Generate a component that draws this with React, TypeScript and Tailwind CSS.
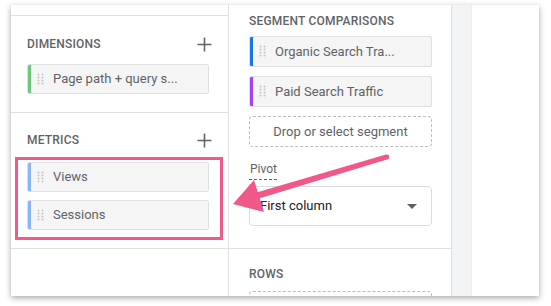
const Grip = () => (
  <svg width="7" height="13" viewBox="0 0 7 13" className="shrink-0">
    {[1.5, 4.5, 7.5, 10.5].map((y) => (
      <g key={y} fill="#c4c4c4">
        <circle cx="1.5" cy={y} r="1" />
        <circle cx="5.5" cy={y} r="1" />
      </g>
    ))}
  </svg>
);

const Plus = () => (
  <svg width="15" height="15" viewBox="0 0 15 15">
    <path d="M7.5 0.5v14M0.5 7.5h14" stroke="#5f6368" strokeWidth="1.6" />
  </svg>
);

const Chip = ({label, bar, w, h}: {label: string; bar: string; w: string; h: string}) => (
  <div
    className={`flex ${w} ${h} shrink-0 items-center gap-[8px] rounded-[2px] border border-[#e0e0e0] bg-[#f5f5f5] pl-[9px] text-[13px] text-[#5f6368]`}
    style={{boxShadow: `inset 3px 0 0 ${bar}`}}
  >
    <Grip />
    <span className="truncate pl-[1px]">{label}</span>
  </div>
);

const Header = ({label, plus}: {label: string; plus?: boolean}) => (
  <div className="flex h-[24px] items-center justify-between">
    <span className="text-[12px] font-medium tracking-[0.2px] text-[#5f6368]">{label}</span>
    {plus && (
      <span className="mr-[16px]">
        <Plus />
      </span>
    )}
  </div>
);

export default function App() {
  return (
    <div
      className="relative h-[306px] w-[551px] overflow-hidden bg-white pl-[11px] pt-[5px]"
      style={{fontFamily: "Roboto, 'Liberation Sans', sans-serif"}}
    >
      <div className="flex h-[291px] w-[528px] overflow-hidden bg-white shadow-[0_2px_6px_rgba(0,0,0,0.35)]">
        {/* variables column */}
        <div className="flex w-[218px] shrink-0 flex-col border-r border-[#e0e0e0]">
          <div className="h-[11px] shrink-0 border-b border-[#e0e0e0]" />
          <div className="flex h-[97px] shrink-0 flex-col gap-[8px] border-b border-[#e0e0e0] pl-[16px] pt-[16px]">
            <Header label="DIMENSIONS" plus />
            <Chip label="Page path + query s..." bar="#6fc77c" w="w-[182px]" h="h-[30px]" />
          </div>
          <div className="flex h-[136px] shrink-0 flex-col border-b border-[#e0e0e0] pt-[15px]">
            <div className="pl-[16px]">
              <Header label="METRICS" plus />
            </div>
            <div className="ml-[4px] mt-[5px] flex h-[83px] w-[208px] flex-col gap-[8px] border-[3px] border-[#f05a8c] pl-[9px] pt-[2px]">
              <Chip label="Views" bar="#8ab4f8" w="w-[182px]" h="h-[30px]" />
              <Chip label="Sessions" bar="#8ab4f8" w="w-[182px]" h="h-[30px]" />
            </div>
          </div>
        </div>

        {/* settings column */}
        <div className="flex w-[223px] shrink-0 flex-col border-r border-[#e0e0e0]">
          <div className="flex h-[244px] shrink-0 flex-col border-b border-[#e0e0e0] pl-[20px] pt-[6px]">
            <div className="flex h-[20px] items-center">
              <span className="text-[12px] font-medium tracking-[0.2px] text-[#5f6368]">SEGMENT COMPARISONS</span>
            </div>
            <div className="mt-[5px] flex flex-col gap-[9px]">
              <Chip label="Organic Search Tra..." bar="#1a73e8" w="w-[183px]" h="h-[31px]" />
              <Chip label="Paid Search Traffic" bar="#a142f4" w="w-[183px]" h="h-[31px]" />
              <div className="flex h-[31px] w-[183px] items-center justify-center rounded-[4px] border border-dashed border-[#bdbdbd] text-[13px] text-[#5f6368]">
                Drop or select segment
              </div>
            </div>
            <div className="mt-[14px] flex">
              <span className="border-b border-dashed border-[#5f6368] pb-[2px] pl-[1px] text-[12px] leading-[16px] text-[#5f6368]">
                Pivot
              </span>
            </div>
            <div className="mt-[6px] flex h-[40px] w-[183px] items-center justify-between rounded-[4px] border border-[#dadce0] pl-[10px] pr-[14px] text-[13px] text-[#202124]">
              <span>First column</span>
              <svg width="10" height="5" viewBox="0 0 10 5">
                <path d="M0 0h10L5 5z" fill="#5f6368" />
              </svg>
            </div>
          </div>
          <div className="flex shrink-0 flex-col gap-[5px] pl-[20px] pt-[13px]">
            <Header label="ROWS" />
            <div className="h-[40px] w-[183px] shrink-0 rounded-[4px] border border-dashed border-[#bdbdbd]" />
          </div>
        </div>

        <div className="w-[20px] shrink-0 border-r border-[#eceef0] bg-[#f3f4f6]" />
        <div className="flex-1 bg-white" />
      </div>

      {/* annotation arrow */}
      <svg className="pointer-events-none absolute left-0 top-0" width="551" height="306" viewBox="0 0 551 306">
        <path d="M386 154.5 L388.5 159 L259 198.5 L256.5 192.5 Z" fill="#f0588a" />
        <circle cx="387" cy="156.8" r="2.4" fill="#f0588a" />
        <path d="M233 204 L254 180 L264 212 Z" fill="#f0588a" />
      </svg>
    </div>
  );
}
